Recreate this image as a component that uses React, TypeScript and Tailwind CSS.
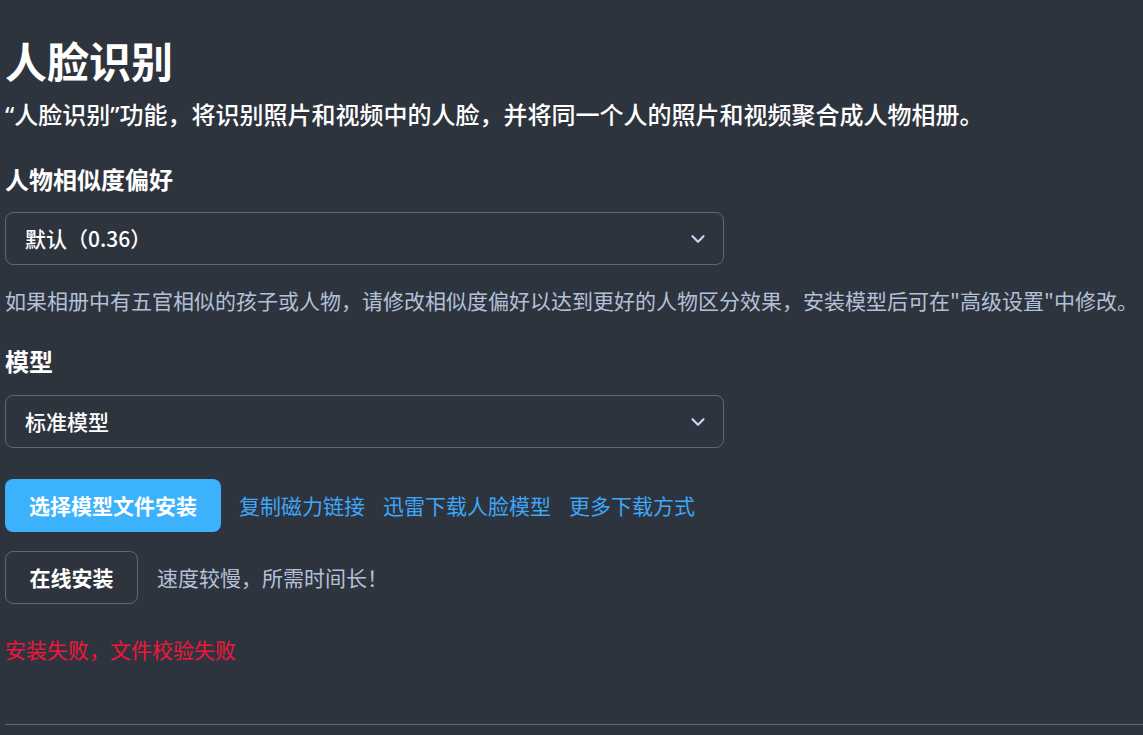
import { ChevronDown } from "lucide-react";

const font = { fontFamily: '"Noto Sans CJK SC", "Noto Sans", sans-serif' };

// narrow latin quotes, like the reference renders them
function Q({ c }: { c: string }) {
  return <span style={{ fontFamily: '"Noto Sans", sans-serif' }}>{c}</span>;
}

function Select({ value }: { value: string }) {
  return (
    <div className="flex h-[53px] w-[719px] items-center justify-between rounded-lg border border-[#5b6678] pl-[19px] pr-[14px]">
      <span className="text-[21px] font-medium text-white">{value}</span>
      <ChevronDown className="h-[22px] w-[22px] text-[#c3d6f2]" strokeWidth={2.4} />
    </div>
  );
}

export default function App() {
  return (
    <div className="min-h-screen w-full bg-[#2e343e] pl-[5px]" style={font}>
      <h1 className="pt-[31px] text-[42px] font-bold leading-[58px] text-white">人脸识别</h1>
      <p className="mt-[8px] text-[24px] font-medium leading-[34px] text-white">
        <Q c="“" />人脸识别<Q c="”" />功能，将识别照片和视频中的人脸，并将同一个人的照片和视频聚合成人物相册。
      </p>

      <h2 className="mt-[30px] text-[24px] font-bold leading-[34px] text-white">人物相似度偏好</h2>
      <div className="mt-[16px]">
        <Select value="默认（0.36）" />
      </div>
      <p className="mt-[20px] text-[21px] leading-[30px] text-[#b3c1d8]">
        如果相册中有五官相似的孩子或人物，请修改相似度偏好以达到更好的人物区分效果，安装模型后可在"高级设置"中修改。
      </p>

      <h2 className="mt-[29px] text-[24px] font-bold leading-[34px] text-white">模型</h2>
      <div className="mt-[17px]">
        <Select value="标准模型" />
      </div>

      <div className="mt-[31px] flex items-center gap-[18px]">
        <button className="h-[53px] w-[216px] rounded-lg bg-[#3cb2fd] text-[21px] font-bold text-white">
          选择模型文件安装
        </button>
        <a className="text-[21px] text-[#3ea7f7]">复制磁力链接</a>
        <a className="text-[21px] text-[#3ea7f7]">迅雷下载人脸模型</a>
        <a className="text-[21px] text-[#3ea7f7]">更多下载方式</a>
      </div>

      <div className="mt-[19px] flex items-center gap-[19px]">
        <button className="h-[53px] w-[133px] rounded-lg border border-[#5b6678] text-[21px] font-bold text-white">
          在线安装
        </button>
        <span className="text-[21px] text-[#b3c1d8]">速度较慢，所需时间长！</span>
      </div>

      <p className="mt-[30px] text-[21px] leading-[30px] text-[#f3153c]">安装失败，文件校验失败</p>

      <div className="mt-[60px] h-px w-full bg-[#5b6678]" />
    </div>
  );
}
